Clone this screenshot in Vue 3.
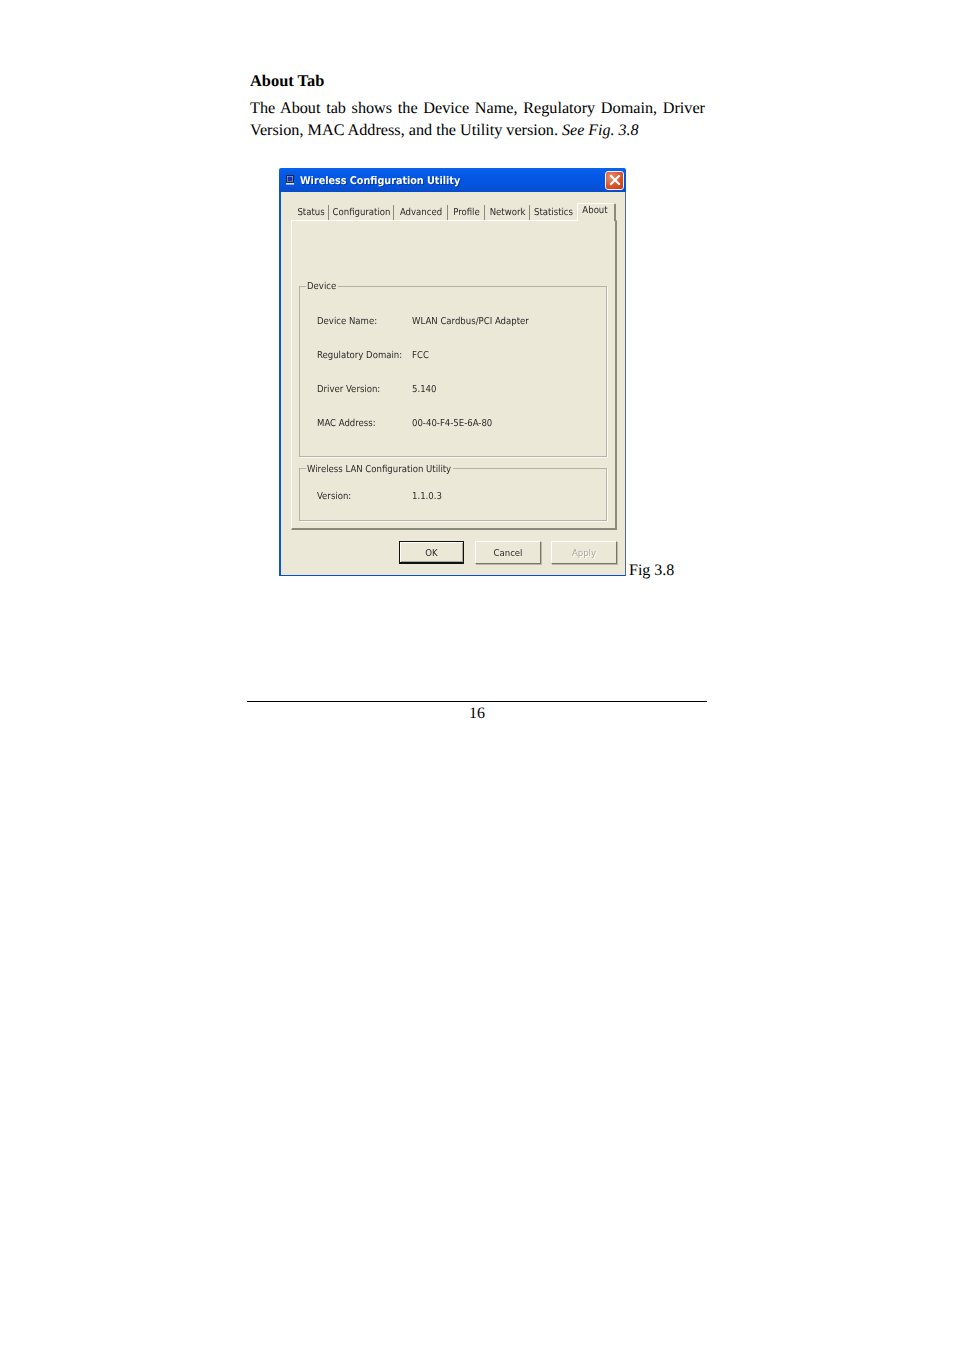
<script setup>
const tabs = [
  { name: 'Status', width: 35 },
  { name: 'Configuration', width: 64 },
  { name: 'Advanced', width: 53 },
  { name: 'Profile', width: 36 },
  { name: 'Network', width: 44 },
  { name: 'Statistics', width: 45, plain: true },
  { name: 'About', width: 39, active: true }
]
const rows = [
  ['Device Name:', 'WLAN Cardbus/PCI Adapter'],
  ['Regulatory Domain:', 'FCC'],
  ['Driver Version:', '5.140'],
  ['MAC Address:', '00-40-F4-5E-6A-80']
]
</script>

<template>
  <div class="page">
    <main class="column">
      <h1 class="heading">About Tab</h1>
      <p class="para">The About tab shows the Device Name, Regulatory Domain, Driver Version, MAC Address, and the Utility version. <em>See Fig. 3.8</em></p>
      <div class="figure">
        <div class="window">
          <div class="titlebar">
            <svg class="appicon" width="10" height="10" viewBox="0 0 10 10">
              <rect x="1.5" y="0.5" width="7" height="6.5" fill="#c8d0d8" stroke="#16243e" stroke-width="1"/>
              <rect x="2.5" y="1.5" width="5" height="4.5" fill="#1030c0"/>
              <rect x="1" y="8" width="8" height="1.6" fill="#e0e0e0"/>
              <rect x="3" y="7" width="4" height="1" fill="#16243e"/>
            </svg>
            <span class="title">Wireless Configuration Utility</span>
            <span class="close">
              <svg width="12" height="12" viewBox="0 0 12 12">
                <path d="M2 2 L10 10 M10 2 L2 10" stroke="#fff" stroke-width="2.2" stroke-linecap="square" fill="none"/>
              </svg>
            </span>
          </div>
          <div class="body">
            <div class="tabs">
              <div
                v-for="t in tabs"
                :key="t.name"
                class="tab"
                :class="{ active: t.active, plain: t.plain }"
                :style="{ width: t.width + 'px' }"
              >{{ t.name }}</div>
            </div>
            <div class="panel">
              <section class="group device">
                <span class="legend">Device</span>
                <div class="info">
                  <template v-for="r in rows" :key="r[0]">
                    <span>{{ r[0] }}</span>
                    <span>{{ r[1] }}</span>
                  </template>
                </div>
              </section>
              <section class="group wlan">
                <span class="legend">Wireless LAN Configuration Utility</span>
                <div class="info single">
                  <span>Version:</span>
                  <span>1.1.0.3</span>
                </div>
              </section>
            </div>
            <div class="buttons">
              <button class="btn default">OK</button>
              <button class="btn">Cancel</button>
              <button class="btn disabled">Apply</button>
            </div>
          </div>
        </div>
        <span class="figlabel">Fig 3.8</span>
      </div>
    </main>
    <footer class="footer">16</footer>
  </div>
</template>

<style scoped>
.page {
  width: 954px;
  height: 1351px;
  background: #fff;
  color: #000;
  font-family: "Liberation Serif", "Times New Roman", serif;
  font-size: 16px;
  line-height: 22px;
  text-rendering: geometricPrecision;
  overflow: hidden;
  box-sizing: border-box;
  padding-top: 70px;
}
.column {
  width: 455px;
  margin-left: 250px;
}
.heading {
  margin: 0 0 5px;
  font-size: 16.4px;
  font-weight: bold;
  line-height: 22px;
}
.para {
  margin: 0;
  font-size: 16.2px;
  text-align: justify;
}
.para em {
  font-size: 16px;
}
.figure {
  display: flex;
  align-items: flex-end;
  margin: 26px 0 0 29px;
  width: 426px;
}
.figlabel {
  margin-left: 3px;
  line-height: 10px;
  white-space: nowrap;
}
.window {
  width: 347px;
  height: 408px;
  display: flex;
  flex-direction: column;
  flex: none;
  font-family: "DejaVu Sans", "Liberation Sans", sans-serif;
  font-stretch: condensed;
  font-size: 9.5px;
  color: #2a2a2a;
  filter: blur(0.3px);
}
.titlebar {
  height: 24px;
  flex: none;
  display: flex;
  align-items: center;
  box-sizing: border-box;
  padding: 0 2px 0 6px;
  background: linear-gradient(#0a62ee 0%, #0458e6 30%, #0553dc 75%, #0a4cc8 100%);
  border-radius: 2px 2px 0 0;
}
.appicon {
  flex: none;
}
.title {
  margin-left: 5px;
  color: #fff;
  font-weight: bold;
  font-size: 10.7px;
  text-shadow: 1px 1px 0 #0a3a9a;
  white-space: nowrap;
  position: relative;
  top: 1px;
}
.close {
  margin-left: auto;
  width: 19px;
  height: 19px;
  box-sizing: border-box;
  display: flex;
  align-items: center;
  justify-content: center;
  border: 1px solid #f2f2f2;
  border-radius: 3px;
  background: radial-gradient(circle at 30% 30%, #ec9070, #d9542a 55%, #bf3a12);
}
.body {
  flex: 1;
  display: flex;
  flex-direction: column;
  box-sizing: border-box;
  background: #ebe8d8;
  border-left: 2px solid #0a55d8;
  border-bottom: 1px solid #0a4fc8;
  border-right: 1px solid #5a6a8a;
  padding: 11px 8px 0 10px;
}
.tabs {
  display: flex;
  align-items: flex-end;
  height: 17px;
  padding-left: 3px;
  gap: 1px;
  position: relative;
  z-index: 1;
}
.tab {
  flex: none;
  height: 15px;
  line-height: 16px;
  text-align: center;
  white-space: nowrap;
  box-sizing: border-box;
  border-right: 1px solid #8a8a7c;
}
.tab.plain {
  border-right: 0;
}
.tab.active {
  height: 18px;
  margin-bottom: -1px;
  line-height: 14px;
  padding-right: 2px;
  background: #ebe8d8;
  border-top: 1px solid #fff;
  border-left: 1px solid #fff;
  border-right: 2px solid #8a8a7c;
  border-radius: 2px 2px 0 0;
}
.panel {
  height: 310px;
  flex: none;
  box-sizing: border-box;
  border-top: 1px solid #fff;
  border-left: 1px solid #fff;
  border-right: 2px solid #8a8a7c;
  border-bottom: 2px solid #8a8a7c;
  padding: 65px 8px 0 7px;
}
.group {
  position: relative;
  box-sizing: border-box;
  border: 1px solid #b4b4a6;
  box-shadow: 1px 1px 0 #fbfbf6;
}
.device {
  height: 171px;
  padding: 28px 0 0 17px;
}
.wlan {
  height: 53px;
  margin-top: 11px;
  padding: 21px 0 0 17px;
}
.legend {
  position: absolute;
  top: -7px;
  left: 6px;
  padding: 0 2px 0 1px;
  line-height: 14px;
  background: #ebe8d8;
  white-space: nowrap;
}
.wlan .legend {
  top: -6px;
}
.info {
  display: grid;
  grid-template-columns: 95px 1fr;
  grid-auto-rows: 34px;
  line-height: 14px;
}
.info.single {
  grid-auto-rows: 14px;
}
.buttons {
  display: flex;
  justify-content: flex-end;
  gap: 10px;
  margin-top: 11px;
}
.btn {
  width: 66px;
  height: 23px;
  padding: 0;
  box-sizing: border-box;
  font: inherit;
  color: #2a2a2a;
  background: #ebe8d8;
  border: 1px solid;
  border-color: #fff #77776a #77776a #fff;
  box-shadow: 1px 1px 0 #b8b8a8;
}
.btn.default {
  width: 65px;
  margin-right: 1px;
  border: 1px solid #111;
  border-bottom-width: 2px;
  box-shadow: inset 1px 1px 0 #fff, inset -1px -1px 0 #a8a898;
}
.btn.disabled {
  color: #a8a89a;
  text-shadow: 1px 1px 0 #fff;
}
.footer {
  box-sizing: border-box;
  width: 460px;
  margin: 125px 0 0 247px;
  padding-top: 1px;
  border-top: 1px solid #000;
  text-align: center;
}
</style>

<style>
html, body {
  margin: 0;
  background: #fff;
}
</style>
